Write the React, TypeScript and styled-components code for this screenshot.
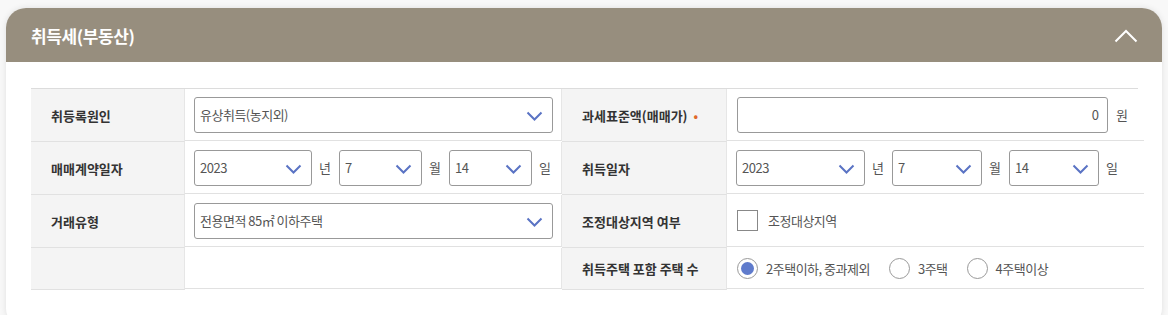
import React, { useState } from "react";
import styled, { createGlobalStyle } from "styled-components";

const GlobalStyle = createGlobalStyle`
  html, body {
    margin: 0;
    padding: 0;
    background: #f8f8f8;
    font-family: "Noto Sans CJK KR", "Noto Sans", sans-serif;
  }
`;

const years = ["2021", "2022", "2023", "2024"];
const months = Array.from({ length: 12 }, (_, i) => String(i + 1));
const days = Array.from({ length: 31 }, (_, i) => String(i + 1));

const Chevron = () => (
  <ChevronIcon viewBox="0 0 17 10" aria-hidden="true">
    <path d="M1.5 1.5 L8.5 8.5 L15.5 1.5" fill="none" stroke="#5a73c4" strokeWidth="2" />
  </ChevronIcon>
);

interface SelectBoxProps {
  value: string;
  options: string[];
  width?: string;
}

const SelectBox: React.FC<SelectBoxProps> = ({ value, options, width }) => (
  <SelectWrap $width={width}>
    <Select defaultValue={value}>
      {options.map((o) => (
        <option key={o} value={o}>
          {o}
        </option>
      ))}
    </Select>
    <Chevron />
  </SelectWrap>
);

const DateFields: React.FC<{ wide?: boolean }> = ({ wide }) => (
  <DateRow>
    <SelectBox value="2023" options={years} width={wide ? "129px" : "118px"} />
    <Unit>년</Unit>
    <SelectBox value="7" options={months} width={wide ? "90px" : "83px"} />
    <Unit>월</Unit>
    <SelectBox value="14" options={days} width={wide ? "90px" : "83px"} />
    <Unit>일</Unit>
  </DateRow>
);

const App: React.FC = () => {
  const [open, setOpen] = useState(true);
  const [houses, setHouses] = useState("2");

  return (
    <>
      <GlobalStyle />
      <Page>
        <Card>
          <Header>
            <Title>취득세(부동산)</Title>
            <ToggleButton onClick={() => setOpen(!open)} aria-label="접기">
              <svg width="24" height="14" viewBox="0 0 24 14">
                <path d="M1.5 12.5 L12 2 L22.5 12.5" fill="none" stroke="#fff" strokeWidth="2" />
              </svg>
            </ToggleButton>
          </Header>
          {open && (
            <Body>
              <Table>
                <LabelCell>취등록원인</LabelCell>
                <FieldCell>
                  <SelectBox value="유상취득(농지외)" options={["유상취득(농지외)", "유상취득(농지)", "상속", "증여"]} />
                </FieldCell>
                <LabelCell>
                  과세표준액(매매가)<Required>•</Required>
                </LabelCell>
                <FieldCell>
                  <AmountInput defaultValue="0" />
                  <Unit>원</Unit>
                </FieldCell>

                <LabelCell>매매계약일자</LabelCell>
                <FieldCell>
                  <DateFields />
                </FieldCell>
                <LabelCell>취득일자</LabelCell>
                <FieldCell>
                  <DateFields wide />
                </FieldCell>

                <LabelCell>거래유형</LabelCell>
                <FieldCell>
                  <SelectBox value="전용면적 85㎡ 이하주택" options={["전용면적 85㎡ 이하주택", "전용면적 85㎡ 초과주택"]} />
                </FieldCell>
                <LabelCell>조정대상지역 여부</LabelCell>
                <FieldCell>
                  <CheckLabel>
                    <CheckBox type="checkbox" />
                    조정대상지역
                  </CheckLabel>
                </FieldCell>

                <LabelCell $short />
                <FieldCell $short />
                <LabelCell $short>취득주택 포함 주택 수</LabelCell>
                <FieldCell $short>
                  <RadioGroup>
                    {[
                      ["2", "2주택이하, 중과제외"],
                      ["3", "3주택"],
                      ["4", "4주택이상"],
                    ].map(([v, label]) => (
                      <RadioLabel key={v}>
                        <Radio
                          type="radio"
                          name="houses"
                          checked={houses === v}
                          onChange={() => setHouses(v)}
                        />
                        {label}
                      </RadioLabel>
                    ))}
                  </RadioGroup>
                </FieldCell>
              </Table>
            </Body>
          )}
        </Card>
      </Page>
    </>
  );
};

export default App;

// Styled components
const Page = styled.div`
  padding: 8px 6px 0;
  background: #f8f8f8;
  height: 315px;
  box-sizing: border-box;
`;

const Card = styled.div`
  background: #fff;
  border-radius: 20px;
  box-shadow: 0 0 6px rgba(0, 0, 0, 0.1);
  overflow: hidden;
  height: 320px;
`;

const Header = styled.div`
  height: 54px;
  background: #978e7e;
  display: flex;
  align-items: center;
  justify-content: space-between;
  padding: 0 24px 0 25px;
`;

const Title = styled.h2`
  margin: 0;
  font-size: 17px;
  font-weight: 700;
  color: #fff;
  letter-spacing: -0.4px;
`;

const ToggleButton = styled.button`
  background: none;
  border: none;
  padding: 0;
  display: flex;
  cursor: pointer;
  margin-top: 2px;
`;

const Body = styled.div`
  padding: 26px 24px 0 25px;
`;

const Table = styled.div`
  display: grid;
  grid-template-columns: 154px 377px 165px 1fr;
  border-top: 1px solid #dcdcdc;
`;

const LabelCell = styled.div<{ $short?: boolean }>`
  height: ${(p) => (p.$short ? "41px" : "52px")};
  background: #f4f4f4;
  border-bottom: 1px solid #e1e1e1;
  border-right: 1px solid #e6e6e6;
  display: flex;
  align-items: center;
  padding-left: 20px;
  font-size: 13px;
  font-weight: 700;
  color: #333;
`;

const FieldCell = styled.div<{ $short?: boolean }>`
  height: ${(p) => (p.$short ? "41px" : "52px")};
  border-bottom: 1px solid #e1e1e1;
  border-right: 1px solid #e6e6e6;
  display: flex;
  align-items: center;
  padding: 0 8px 0 9px;
  box-sizing: border-box;
  &:nth-child(4n) {
    border-right: none;
  }
`;

const Required = styled.span`
  color: #e0682a;
  font-size: 12px;
  margin-left: 6px;
`;

const SelectWrap = styled.div<{ $width?: string }>`
  position: relative;
  width: ${(p) => p.$width || "359px"};
  flex: none;
`;

const Select = styled.select`
  appearance: none;
  width: 100%;
  height: 36px;
  border: 1px solid #999;
  border-radius: 3px;
  background: #fff;
  padding: 0 30px 0 5px;
  font-family: inherit;
  font-size: 13px;
  color: #555;
  letter-spacing: -0.5px;
  outline: none;
`;

const ChevronIcon = styled.svg`
  position: absolute;
  right: 10px;
  top: 14px;
  width: 17px;
  height: 10px;
  pointer-events: none;
`;

const DateRow = styled.div`
  display: flex;
  align-items: center;
`;

const Unit = styled.span`
  font-size: 13px;
  color: #555;
  margin: 0 8px 0 7px;
`;

const AmountInput = styled.input`
  width: 371px;
  height: 36px;
  box-sizing: border-box;
  border: 1px solid #999;
  border-radius: 3px;
  text-align: right;
  padding: 0 8px;
  font-family: inherit;
  font-size: 13px;
  color: #555;
  outline: none;
  margin-left: 1px;
  margin-right: 1px;
`;

const CheckLabel = styled.label`
  display: flex;
  align-items: center;
  gap: 10px;
  font-size: 13px;
  color: #555;
  letter-spacing: -0.5px;
`;

const CheckBox = styled.input`
  appearance: none;
  width: 21px;
  height: 21px;
  margin: 0 0 0 1px;
  border: 1px solid #888;
  background: #fff;
  box-sizing: border-box;
`;

const RadioGroup = styled.div`
  display: flex;
  align-items: center;
  gap: 18px;
`;

const RadioLabel = styled.label`
  display: flex;
  align-items: center;
  gap: 8px;
  font-size: 13px;
  color: #555;
  letter-spacing: -0.5px;
`;

const Radio = styled.input`
  appearance: none;
  width: 21px;
  height: 21px;
  margin: 0 0 0 1px;
  border: 1px solid #999;
  border-radius: 50%;
  background: #fff;
  box-sizing: border-box;
  display: grid;
  place-items: center;
  &:checked::after {
    content: "";
    width: 13px;
    height: 13px;
    border-radius: 50%;
    background: #5f7bcc;
  }
`;
